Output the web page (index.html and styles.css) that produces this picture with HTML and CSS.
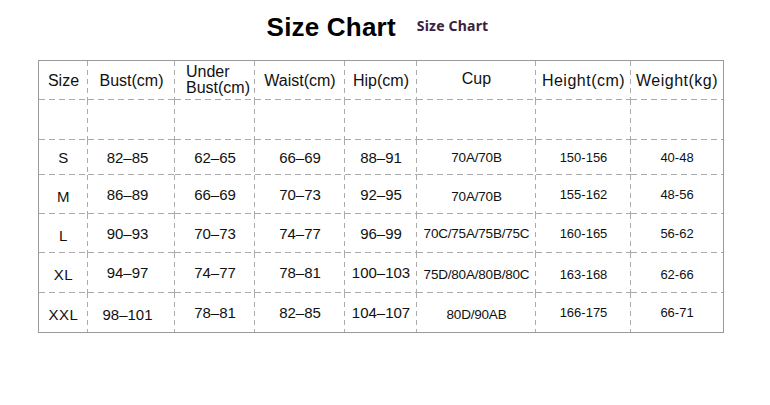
FILE: index.html
```html
<!DOCTYPE html>
<html>
<head>
<meta charset="utf-8">
<link rel="stylesheet" href="styles.css">
</head>
<body>
<div class="title-row">
  <div class="title-big">Size Chart</div>
  <div class="title-small">Size Chart</div>
</div>
<table class="chart">
  <colgroup>
    <col class="w1"><col class="w2"><col class="w3"><col class="w4"><col class="w5"><col class="w6"><col class="w7"><col class="w8">
  </colgroup>
  <tr class="r-head">
    <td class="c h">Size</td>
    <td class="c h">Bust(cm)</td>
    <td class="c h"><span class="two">Under<br>Bust(cm)</span></td>
    <td class="c h">Waist(cm)</td>
    <td class="c h">Hip(cm)</td>
    <td class="c h cup-h">Cup</td>
    <td class="c h wide">Height(cm)</td>
    <td class="c h wide last">Weight(kg)</td>
  </tr>
  <tr class="r-empty">
    <td class="c"></td><td class="c"></td><td class="c"></td><td class="c"></td><td class="c"></td><td class="c"></td><td class="c"></td><td class="c last"></td>
  </tr>
  <tr class="r-s">
    <td class="c sz">S</td><td class="c v shift">82–85</td><td class="c v">62–65</td><td class="c v">66–69</td><td class="c v">88–91</td><td class="c cup">70A/70B</td><td class="c n">150-156</td><td class="c n last">40-48</td>
  </tr>
  <tr class="r-m">
    <td class="c sz low">M</td><td class="c v shift">86–89</td><td class="c v">66–69</td><td class="c v">70–73</td><td class="c v">92–95</td><td class="c cup low">70A/70B</td><td class="c n">155-162</td><td class="c n last">48-56</td>
  </tr>
  <tr class="r-l">
    <td class="c sz low">L</td><td class="c v shift">90–93</td><td class="c v">70–73</td><td class="c v">74–77</td><td class="c v">96–99</td><td class="c cup">70C/75A/75B/75C</td><td class="c n">160-165</td><td class="c n last">56-62</td>
  </tr>
  <tr class="r-xl">
    <td class="c sz low">XL</td><td class="c v shift">94–97</td><td class="c v">74–77</td><td class="c v">78–81</td><td class="c v">100–103</td><td class="c cup low">75D/80A/80B/80C</td><td class="c n low">163-168</td><td class="c n low last">62-66</td>
  </tr>
  <tr class="r-xxl">
    <td class="c sz low bot">XXL</td><td class="c v low bot shift">98–101</td><td class="c v bot">78–81</td><td class="c v bot">82–85</td><td class="c v bot">104–107</td><td class="c cup low bot">80D/90AB</td><td class="c n bot">166-175</td><td class="c n bot last">66-71</td>
  </tr>
</table>
</body>
</html>
```
FILE: styles.css
```css
html, body {
  margin: 0;
  padding: 0;
  background: #ffffff;
  width: 770px;
  height: 405px;
  overflow: hidden;
}

body {
  font-family: "Liberation Sans", Arial, sans-serif;
  color: #111;
}

.title-row {
  height: 60px;
  box-sizing: border-box;
  padding-top: 12px;
  padding-right: 15px;
  display: flex;
  justify-content: center;
  align-items: flex-start;
  gap: 21px;
}

.title-big {
  font-family: "Liberation Sans", Arial, sans-serif;
  font-weight: bold;
  font-size: 26px;
  line-height: 30px;
  letter-spacing: 0.2px;
  color: #000;
}

.title-small {
  font-family: "Noto Sans", "Open Sans", sans-serif;
  font-weight: bold;
  font-size: 14px;
  line-height: 20px;
  margin-top: 4px;
  letter-spacing: 0.2px;
  color: #3b2140;
}

.chart {
  margin-left: 38px;
  width: 686px;
  table-layout: fixed;
  border-collapse: separate;
  border-spacing: 0;
  border: 1px solid #9a9a9a;
}

.w1 { width: 49px; }
.w2 { width: 87px; }
.w3 { width: 80px; }
.w4 { width: 90px; }
.w5 { width: 72px; }
.w6 { width: 119px; }
.w7 { width: 95px; }
.w8 { width: 92px; }

.r-head { height: 39px; }
.r-empty { height: 40px; }
.r-s { height: 35px; }
.r-m { height: 39px; }
.r-l { height: 39px; }
.r-xl { height: 40px; }
.r-xxl { height: 39px; }

.c {
  padding: 0;
  line-height: 18px;
  text-align: center;
  vertical-align: middle;
  white-space: nowrap;
  background-image:
    repeating-linear-gradient(to right, #ababab 0 6px, transparent 6px 10px),
    repeating-linear-gradient(to bottom, #ababab 0 5px, transparent 5px 9px);
  background-size: 100% 1px, 1px 100%;
  background-position: left bottom, right top;
  background-repeat: no-repeat;
}

.c.last {
  background-image: repeating-linear-gradient(to right, #ababab 0 6px, transparent 6px 10px);
  background-size: 100% 1px;
  background-position: left bottom;
}

.c.bot {
  background-image: repeating-linear-gradient(to bottom, #ababab 0 5px, transparent 5px 9px);
  background-size: 1px 100%;
  background-position: right top;
}

.c.bot.last {
  background-image: none;
}

.h {
  font-size: 16px;
  color: #111;
}

.h.wide {
  letter-spacing: 0.5px;
}

.cup-h {
  padding-bottom: 4px;
}

.two {
  display: inline-block;
  text-align: left;
  line-height: 16px;
  padding-left: 6px;
}

.sz {
  font-size: 15px;
  letter-spacing: 0.5px;
}

.v {
  font-size: 15px;
}

.v.shift {
  padding-right: 8px;
}

.cup {
  font-size: 13.5px;
  letter-spacing: -0.2px;
}

.n {
  font-size: 13px;
}

.low {
  padding-top: 4px;
}
```
